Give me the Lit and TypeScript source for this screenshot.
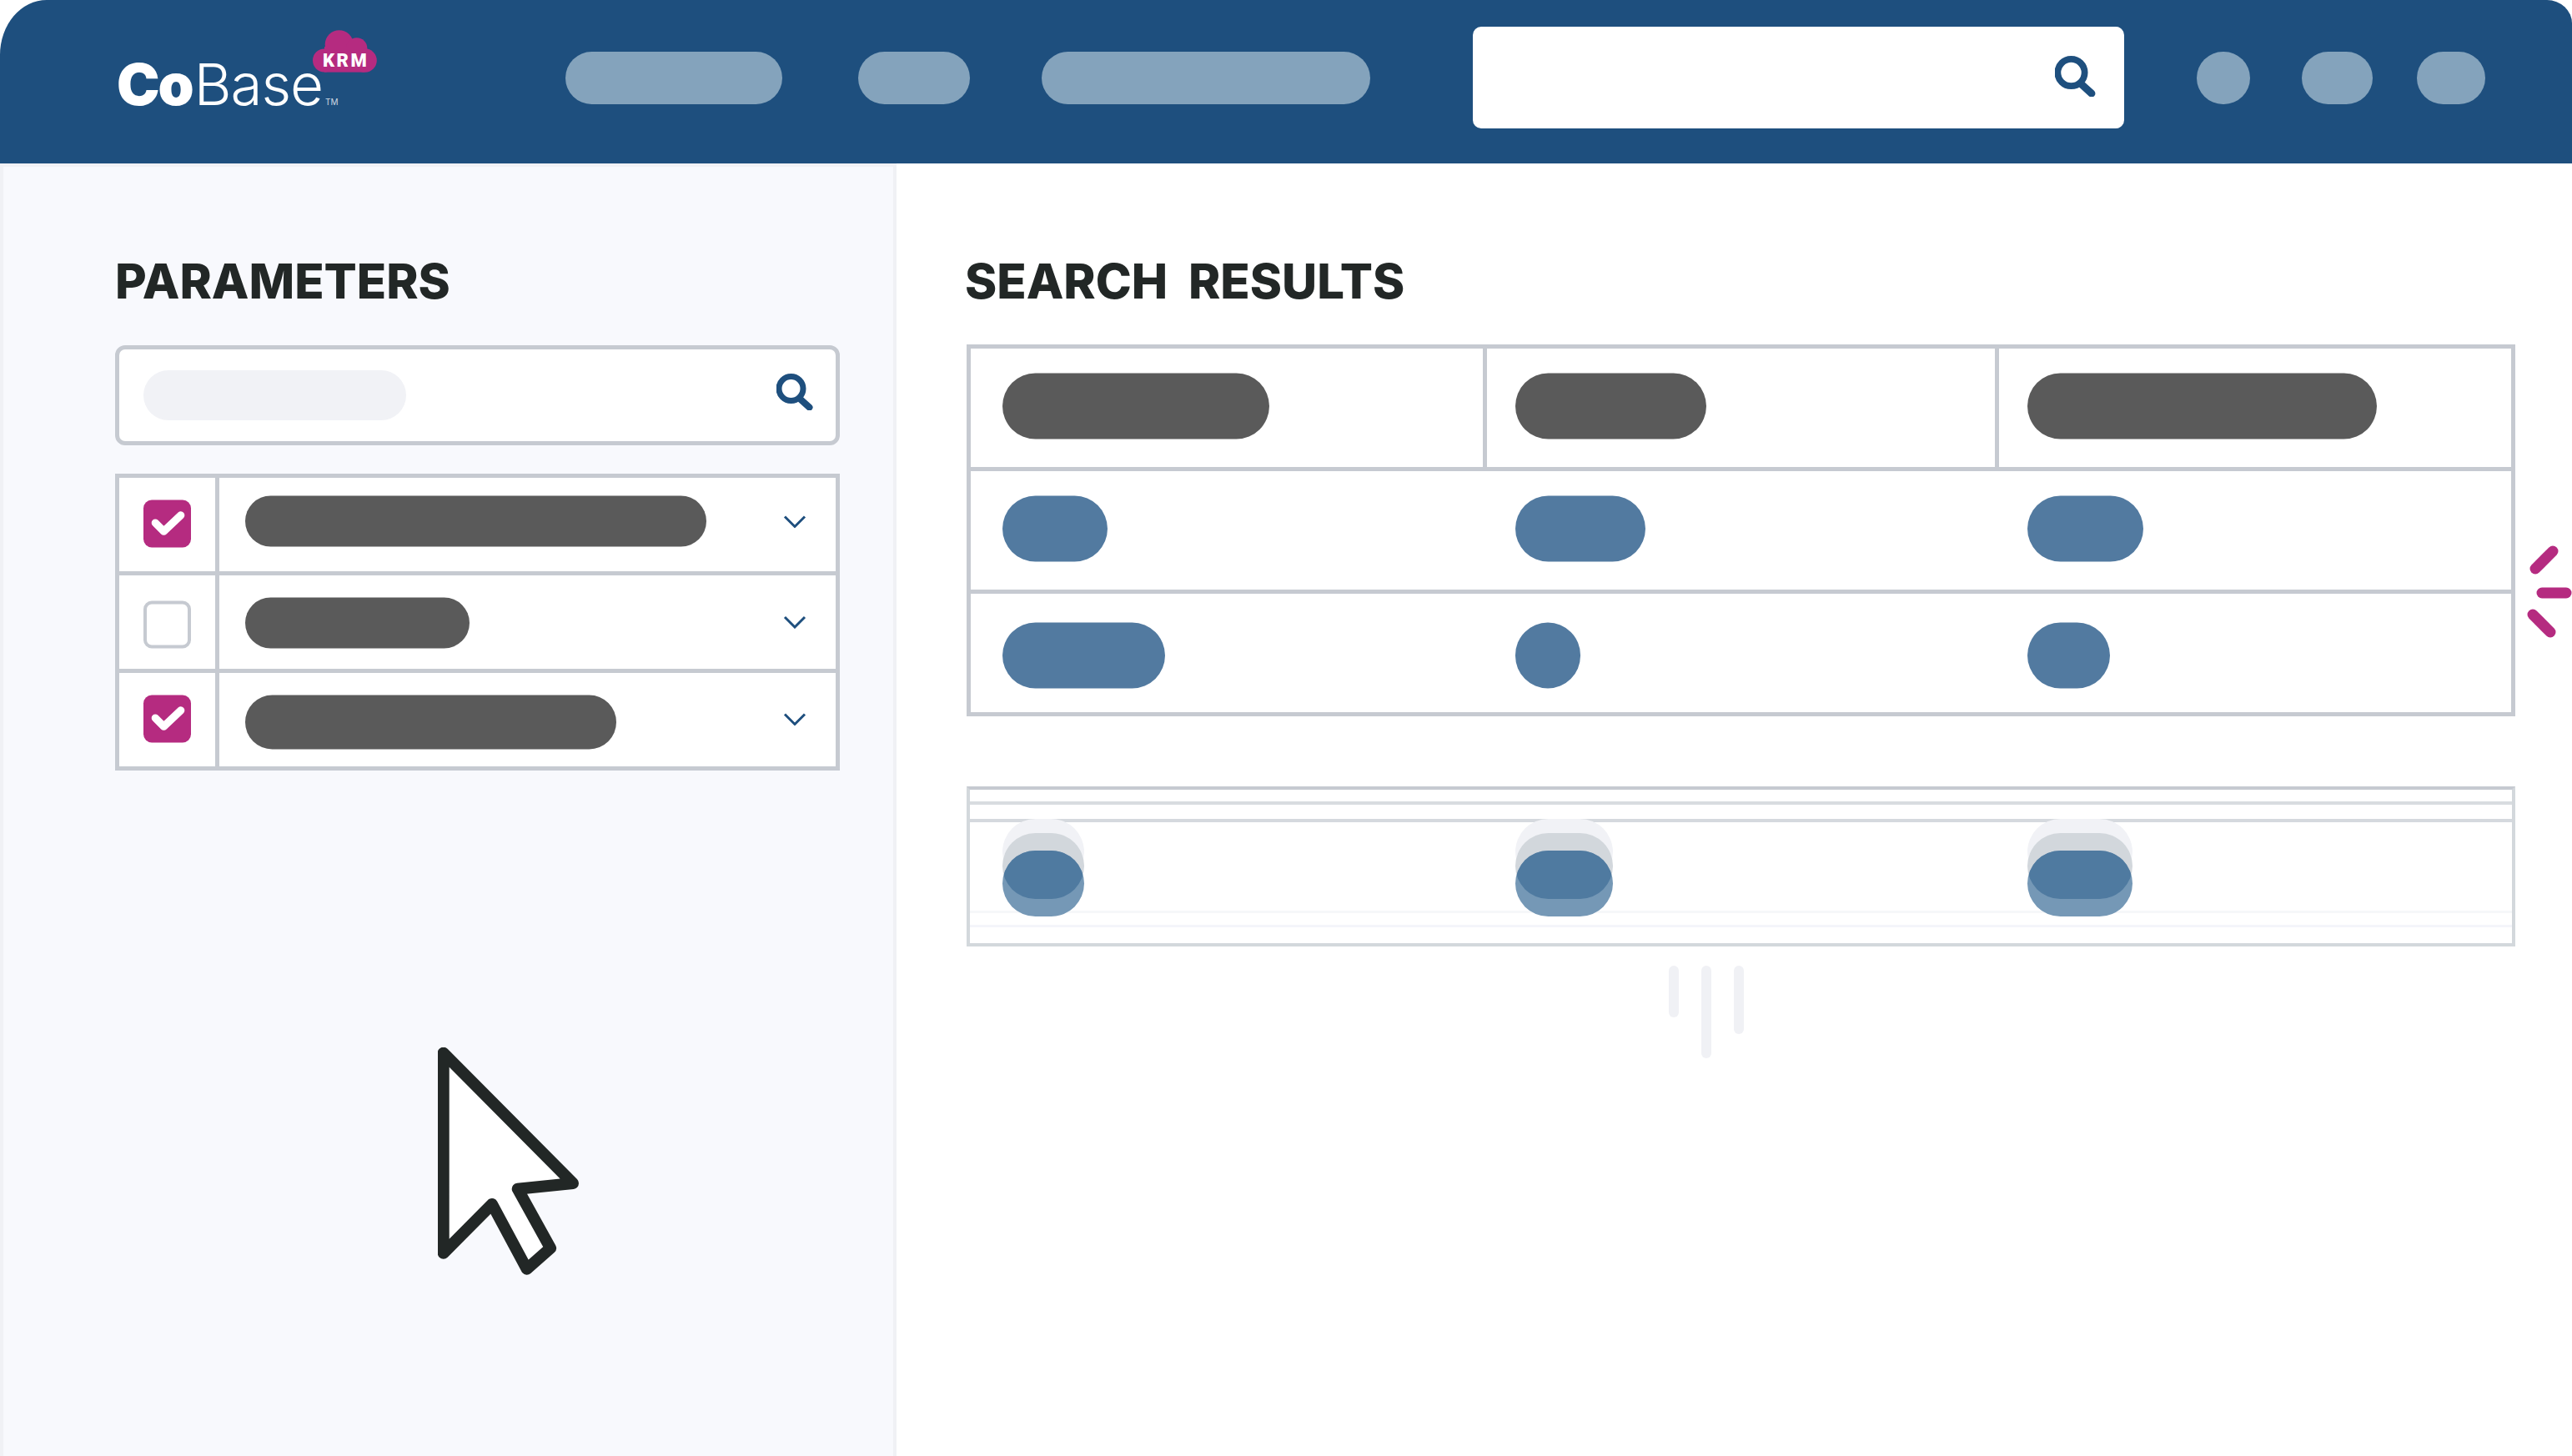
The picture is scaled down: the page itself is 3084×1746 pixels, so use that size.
import { LitElement, html, css, svg } from 'lit';
import { customElement } from 'lit/decorators.js';
import { styleMap } from 'lit/directives/style-map.js';

const NAV_LEFT = [
  { width: 260, gap: 0 },
  { width: 134, gap: 91 },
  { width: 394, gap: 86 },
];
const NAV_RIGHT = [
  { width: 64, gap: 87 },
  { width: 85, gap: 62 },
  { width: 82, gap: 53 },
];

const PARAMS = [
  { checked: true, width: 553, height: 61, pillY: -4.5, boxY: -1.5, chevY: -3.5 },
  { checked: false, width: 269, height: 61, pillY: 0.5, boxY: 2.5, chevY: 0 },
  { checked: true, width: 445, height: 65, pillY: 2.5, boxY: -1.5, chevY: -0.5 },
];

const RESULT_ROWS = [
  { dy: -2.5, cells: [126, 156, 139] },
  { dy: 2.5, cells: [195, 78, 99] },
];
const RESULT_HEADER = [320, 229, 419];
const GHOST_WIDTHS = [98, 117, 126];

const searchIcon = (size: number) => html`
  <svg class="search-icon" viewBox="0 0 44 44" width=${size} height=${size} fill="none" stroke="#1e4f7e">
    <circle cx="17.5" cy="18" r="14.5" stroke-width="7" />
    <path d="M29 31 L39.5 40.5" stroke-width="8" stroke-linecap="round" />
  </svg>
`;

const chevron = (dy: number) => html`
  <svg
    class="chevron"
    viewBox="0 0 28 16"
    width="28"
    height="16"
    fill="none"
    stroke="#1e4f7e"
    stroke-width="3"
    style=${styleMap({ transform: `translateY(${dy}px)` })}
  >
    <path d="M2 2 L14 14 L26 2" />
  </svg>
`;

const cloud = svg`
  <svg viewBox="0 0 77 52" width="77" height="52" fill="#b52b80">
    <circle cx="14" cy="36.5" r="14" />
    <circle cx="31.7" cy="17.2" r="17" />
    <circle cx="52.7" cy="22" r="12.7" />
    <circle cx="62.5" cy="36.5" r="14.3" />
    <rect x="14" y="20" width="48" height="30.6" />
  </svg>
`;

@customElement('app-root')
export class AppRoot extends LitElement {
  render() {
    return html`
      <header class="top">
        <div class="logo">
          <span class="co">Co</span><span class="base">Base</span><span class="tm">TM</span>
          <div class="badge">${cloud}<span class="krm">KRM</span></div>
        </div>
        ${NAV_LEFT.map(n => this.navPill(n))}
        <div class="top-search">${searchIcon(49)}</div>
        ${NAV_RIGHT.map(n => this.navPill(n))}
      </header>

      <main class="body">
        <aside class="side">
          <h2 class="title">PARAMETERS</h2>
          <div class="side-search">
            <div class="placeholder"></div>
            ${searchIcon(44)}
          </div>
          <div class="param-table">
            ${PARAMS.map(
              p => html`
                <div class="param-row">
                  <div class="param-check">
                    <div
                      class="box ${p.checked ? 'on' : ''}"
                      style=${styleMap({ transform: `translateY(${p.boxY}px)` })}
                    >
                      ${p.checked
                        ? html`<svg viewBox="0 0 56 56" width="57" height="57" fill="none" stroke="#fff" stroke-width="9" stroke-linecap="round" stroke-linejoin="round">
                            <path d="M14 27 L24 37 L44 18" />
                          </svg>`
                        : ''}
                    </div>
                  </div>
                  <div class="param-main">
                    <div
                      class="dark-pill"
                      style=${styleMap({
                        width: `${p.width}px`,
                        height: `${p.height}px`,
                        transform: `translateY(${p.pillY}px)`,
                      })}
                    ></div>
                    ${chevron(p.chevY)}
                  </div>
                </div>
              `,
            )}
          </div>
        </aside>

        <section class="results">
          <h2 class="title">SEARCH RESULTS</h2>
          <div class="result-table">
            <div class="result-row head">
              ${RESULT_HEADER.map(
                w => html`<div class="cell"><div class="cell-pill dark" style=${styleMap({ width: `${w}px` })}></div></div>`,
              )}
            </div>
            ${RESULT_ROWS.map(
              r => html`
                <div class="result-row">
                  ${r.cells.map(
                    w => html`<div class="cell">
                      <div
                        class="cell-pill blue"
                        style=${styleMap({ width: `${w}px`, transform: `translateY(${r.dy}px)` })}
                      ></div>
                    </div>`,
                  )}
                </div>
              `,
            )}
          </div>

          <div class="ghost-table">
            <div class="ghost-space s1"></div>
            <div class="ghost-space s2"></div>
            <div class="ghost-space s3"></div>
            <div class="ghost-space s4"></div>
            <div class="ghost-space s5"></div>
            <div class="ghost-cols">
              ${GHOST_WIDTHS.map(
                w => html`<div class="cell">
                  <div class="stack" style=${styleMap({ width: `${w}px` })}>
                    <div class="layer l1"></div>
                    <div class="layer l2"></div>
                    <div class="layer l3"><div class="layer overlap"></div></div>
                  </div>
                </div>`,
              )}
            </div>
          </div>

          <div class="ticks">
            <div class="tick t1"></div>
            <div class="tick t2"></div>
            <div class="tick t3"></div>
          </div>
        </section>
      </main>

      <svg class="cursor" viewBox="525 1256 172 275" width="172" height="275">
        <path
          d="M531.7 1262.7 L687 1419 L620.7 1425.7 L660 1496.7 L631.7 1521.7 L590 1444 L531.7 1502.7 Z"
          fill="#fff"
          stroke="#222726"
          stroke-width="14"
          stroke-linejoin="round"
        />
      </svg>

      <svg class="burst" viewBox="3030 650 54 120" width="54" height="120" fill="none" stroke="#b52b80" stroke-width="13" stroke-linecap="round">
        <path d="M3040 682 L3061 661" />
        <path d="M3048 711 L3077 711" />
        <path d="M3037 737 L3058 758" />
      </svg>
    `;
  }

  navPill(n: { width: number; gap: number }) {
    return html`<div class="nav-pill" style=${styleMap({ width: `${n.width}px`, marginLeft: `${n.gap}px` })}></div>`;
  }

  static styles = css`
    :host {
      display: grid;
      grid-template-rows: 196px 1fr;
      position: relative;
      width: 3084px;
      height: 1746px;
      overflow: hidden;
      background: #fff;
      font-family: 'Inter', 'Liberation Sans', sans-serif;
    }

    .top {
      display: flex;
      align-items: center;
      padding: 0 0 10px 140px;
      box-sizing: border-box;
      background: #1e4f7e;
      border-radius: 56px 30px 0 0 / 66px 28px 0 0;
    }

    .logo {
      position: relative;
      width: 538px;
      flex: none;
      display: flex;
      align-items: baseline;
      color: #fff;
      line-height: 84px;
      font-size: 69px;
      transform: translateY(18px);
    }

    .co {
      font-weight: 900;
      letter-spacing: -2px;
    }

    .base {
      font-weight: 300;
      margin-left: 2px;
      letter-spacing: -1px;
    }

    .tm {
      font-size: 10px;
      font-weight: 400;
      margin-left: 3px;
      color: #cfd8e2;
    }

    .badge {
      position: absolute;
      left: 235px;
      top: -23px;
      width: 77px;
      height: 52px;
    }

    .badge svg {
      display: block;
    }

    .krm {
      position: absolute;
      left: 12px;
      top: 24px;
      font-family: 'Roboto', sans-serif;
      font-size: 22px;
      line-height: 26px;
      font-weight: 900;
      letter-spacing: 2.5px;
      color: #fff;
    }

    .nav-pill {
      height: 63px;
      flex: none;
      border-radius: 32px;
      background: #84a3bc;
    }

    .top-search {
      width: 781px;
      height: 122px;
      flex: none;
      margin-left: 123px;
      box-sizing: border-box;
      padding-right: 34px;
      display: flex;
      align-items: center;
      justify-content: flex-end;
      background: #fff;
      border-radius: 10px;
    }

    .search-icon {
      display: block;
      flex: none;
    }

    .top-search .search-icon {
      transform: translateY(-2px);
    }

    .body {
      display: grid;
      grid-template-columns: 1075px 1fr;
      min-height: 0;
    }

    .side {
      box-sizing: border-box;
      padding: 108px 64px 0 134px;
      background: #f8f9fd;
      border: solid #f0f1f5;
      border-width: 4px 4px 0 4px;
    }

    .title {
      margin: 0 0 48px;
      font-size: 58px;
      line-height: 58px;
      font-weight: 800;
      word-spacing: 12px;
      color: #222726;
      white-space: nowrap;
    }

    .side-search {
      height: 120px;
      box-sizing: border-box;
      display: flex;
      align-items: center;
      justify-content: space-between;
      padding: 0 27px 0 29px;
      background: #fff;
      border: 5px solid #c6cad1;
      border-radius: 12px;
    }

    .side-search .search-icon {
      transform: translateY(-4px);
    }

    .placeholder {
      width: 315px;
      height: 60px;
      border-radius: 30px;
      background: #f1f2f6;
    }

    .param-table {
      margin-top: 34px;
      background: #c6cad1;
      border: 5px solid #c6cad1;
      display: grid;
      grid-auto-rows: 112px;
      row-gap: 5px;
    }

    .param-row {
      display: grid;
      grid-template-columns: 115px 1fr;
      column-gap: 5px;
    }

    .param-check,
    .param-main {
      display: flex;
      align-items: center;
      background: #fff;
    }

    .param-check {
      padding-left: 29px;
    }

    .param-main {
      padding: 0 35px 0 31px;
      justify-content: space-between;
    }

    .box {
      width: 57px;
      height: 57px;
      box-sizing: border-box;
      border: 4px solid #c6cad1;
      border-radius: 10px;
      background: #fff;
    }

    .box.on {
      border: none;
      background: #b52b80;
    }

    .box svg {
      display: block;
    }

    .dark-pill {
      border-radius: 33px;
      background: #5a5a5a;
    }

    .chevron {
      flex: none;
      display: block;
    }

    .results {
      padding: 112px 68px 0 84px;
    }

    .results .title {
      margin-bottom: 47px;
      margin-left: -2px;
    }

    .result-table {
      border: 5px solid #c6cad1;
      background: #c6cad1;
      display: grid;
      grid-auto-rows: 142px;
      row-gap: 5px;
    }

    .result-row {
      display: grid;
      grid-template-columns: 614px 609px 1fr;
      column-gap: 5px;
    }

    .result-row:not(.head) {
      background: #fff;
    }

    .cell {
      display: flex;
      align-items: center;
      padding-left: 34px;
      background: #fff;
    }

    .cell:first-child {
      padding-left: 38px;
    }

    .cell-pill {
      height: 79px;
      border-radius: 40px;
    }

    .dark {
      background: #5a5a5a;
      transform: translateY(-2.5px);
    }

    .blue {
      background: #527aa0;
    }

    .ghost-table {
      position: relative;
      margin-top: 84px;
      height: 192px;
      box-sizing: border-box;
      display: flex;
      flex-direction: column;
      border: 4px solid #d3d8dc;
      border-top-color: #c6cad1;
      border-bottom-color: #d3d8dc;
    }

    .ghost-space {
      box-sizing: border-box;
    }

    .s1 {
      height: 18px;
      border-bottom: 4px solid #d8dce0;
    }

    .s2 {
      height: 21px;
      border-bottom: 4px solid #d5d9de;
    }

    .s3 {
      height: 109px;
      border-bottom: 3px solid #f6f7f9;
    }

    .s4 {
      height: 17px;
      border-bottom: 3px solid #f4f5fa;
    }

    .s5 {
      flex: 1;
    }

    .ghost-cols {
      position: absolute;
      inset: 0;
      display: grid;
      grid-template-columns: 615px 609px 1fr;
      column-gap: 5px;
    }

    .ghost-cols .cell {
      background: none;
      align-items: flex-start;
    }

    .ghost-cols .cell:first-child {
      padding-left: 39px;
    }

    .stack {
      position: relative;
      height: 100%;
    }

    .layer {
      position: absolute;
      left: 0;
      right: 0;
      height: 79px;
      border-radius: 40px;
    }

    .l1 {
      top: 35px;
      background: #f1f2f6;
    }

    .l2 {
      top: 52px;
      background: #d2d7dc;
    }

    .l3 {
      top: 73px;
      background: #7598b6;
      overflow: hidden;
    }

    .overlap {
      top: -21px;
      background: #4f7aa0;
    }

    .ticks {
      display: flex;
      align-items: flex-start;
      gap: 27px;
      margin: 23px 0 0 842px;
    }

    .tick {
      width: 12px;
      border-radius: 6px;
      background: #f0f1f5;
    }

    .t1 {
      height: 62px;
    }

    .t2 {
      height: 111px;
    }

    .t3 {
      height: 82px;
    }

    .cursor {
      position: absolute;
      left: 525px;
      top: 1256px;
    }

    .burst {
      position: absolute;
      right: 0;
      top: 650px;
    }
  `;
}
